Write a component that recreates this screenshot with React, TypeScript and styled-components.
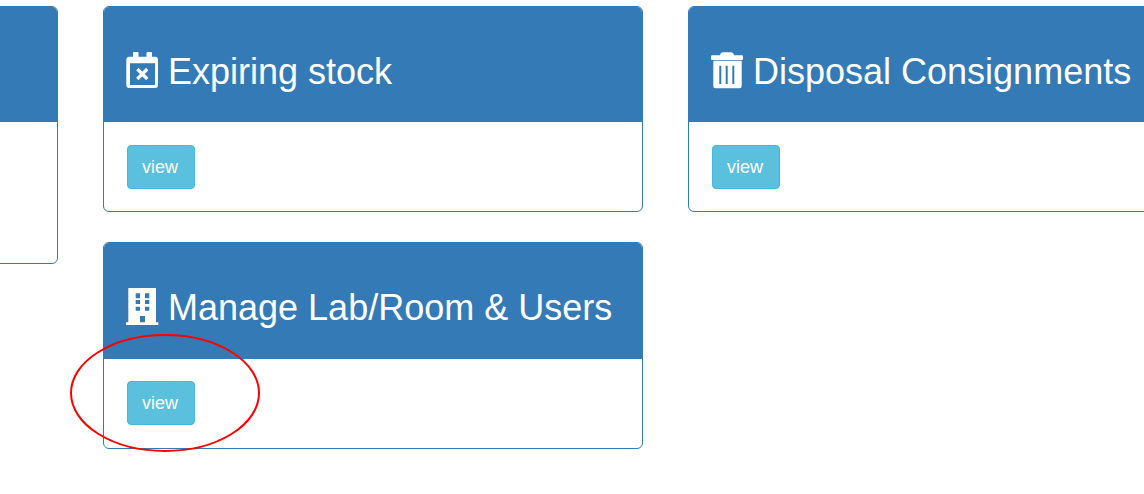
import styled, {createGlobalStyle} from 'styled-components';

const GlobalStyle = createGlobalStyle`
    html, body {
        margin: 0;
        padding: 0;
        background: #fff;
        overflow: hidden;
    }
`

const CalendarIcon = () => (
    <IconSvg viewBox="0 0 32 37">
        <path fill="#fff" fillRule="evenodd" d="M7 0h3.500a1 1 0 0 1 1 1v3.700h8V1a1 1 0 0 1 1-1H24a1 1 0 0 1 1 1v3.700h3a3 3 0 0 1 3 3V33a3 3 0 0 1-3 3H2.300a3 3 0 0 1-3-3V7.700a3 3 0 0 1 3-3H6V1a1 1 0 0 1 1-1zM3 11.300v21.200a.5.5 0 0 0 .5.500h24a.5.5 0 0 0 .5-.5V11.300z"/>
        <path stroke="#fff" strokeWidth="3.200" d="M10.300 17l10 10M20.300 17l-10 10"/>
    </IconSvg>
);

const TrashIcon = () => (
    <IconSvg viewBox="0 0 32 37">
        <path fill="#fff" fillRule="evenodd" d="M8 3.200Q8.500.3 11 .3h8q2.500 0 3 2.900h8a1 1 0 0 1 1 1V7a1 1 0 0 1-1 1H0a1 1 0 0 1-1-1V4.200a1 1 0 0 1 1-1zM1.300 8.700h28.400V34a2.300 2.300 0 0 1-2.300 2.300H3.600A2.300 2.300 0 0 1 1.300 34zM7.300 13.700V32h2V13.700zM13.700 13.700V32h2V13.700zM20.300 13.700V32h2V13.700z"/>
    </IconSvg>
);

const BuildingIcon = () => (
    <IconSvg viewBox="0 0 32 37">
        <path fill="#fff" fillRule="evenodd" d="M1.300 0H29v34.300h2.300V37H-1v-2.700h2.300zM8.700 5.300v5H13v-5zM18 5.300v5h4.300v-5zM8.700 12v4H13v-4zM18 12v4h4.300v-4zM8.700 18.700v4H13v-4zM18 18.700v4h4.300v-4zM13 28v6.300h5V28z"/>
    </IconSvg>
);

const Panel = ({icon, title, tall}: {icon?: React.ReactNode; title?: string; tall?: boolean}) => (
    <Card>
        <CardHeading>
            <CardTitle>
                {icon}
                <span>{title}</span>
            </CardTitle>
        </CardHeading>
        <CardBody $tall={tall}>
            {!tall && <ViewButton>view</ViewButton>}
        </CardBody>
    </Card>
);

export default function App() {
    return (
        <Page>
            <GlobalStyle/>
            <Columns>
                <Column>
                    <Panel tall/>
                </Column>
                <Column>
                    <Panel icon={<CalendarIcon/>} title="Expiring stock"/>
                    <Panel icon={<BuildingIcon/>} title="Manage Lab/Room & Users"/>
                </Column>
                <Column>
                    <Panel icon={<TrashIcon/>} title="Disposal Consignments"/>
                </Column>
            </Columns>
            <Annotation viewBox="0 0 192 120">
                <ellipse cx="96" cy="60" rx="94" ry="58" fill="none" stroke="#f00" strokeWidth="2"/>
            </Annotation>
        </Page>
    );
}

const Page = styled.div`
    position: relative;
    width: 1144px;
    height: 494px;
    overflow: hidden;
    font-family: "Liberation Sans", Arial, sans-serif;
`

const Columns = styled.div`
    display: flex;
    align-items: flex-start;
    gap: 45px;
    width: 1800px;
    margin-left: -482px;
    padding-top: 5.6px;
`

const Column = styled.div`
    width: 540px;
    flex: none;
    display: flex;
    flex-direction: column;
    gap: 30px;
`

const Card = styled.div`
    box-sizing: border-box;
    border: 1px solid #337ab7;
    border-radius: 6px;
    background: #fff;
    overflow: hidden;
`

const CardHeading = styled.div`
    height: 115.6px;
    box-sizing: border-box;
    padding: 45px 23px 0;
    background: #337ab7;
`

const CardTitle = styled.h3`
    margin: 0;
    min-height: 40px;
    display: flex;
    align-items: flex-start;
    gap: 9px;
    font-size: 36px;
    font-weight: 400;
    line-height: 39.6px;
    color: #fff;
    white-space: nowrap;
`

const IconSvg = styled.svg`
    width: 32px;
    height: 37px;
    flex: none;
    overflow: visible;
`

const CardBody = styled.div<{$tall?: boolean}>`
    box-sizing: border-box;
    height: ${props => (props.$tall ? '140.8px' : '89px')};
    padding: 22.5px 23px;
`

const ViewButton = styled.button`
    display: block;
    box-sizing: border-box;
    width: 68px;
    height: 44px;
    padding: 0.8px 2px 0 0;
    border: 1px solid #46b8da;
    border-radius: 4px;
    background: #5bc0de;
    color: #fff;
    font-family: inherit;
    font-size: 18px;
`

const Annotation = styled.svg`
    position: absolute;
    left: 69px;
    top: 333px;
    width: 192px;
    height: 120px;
`
